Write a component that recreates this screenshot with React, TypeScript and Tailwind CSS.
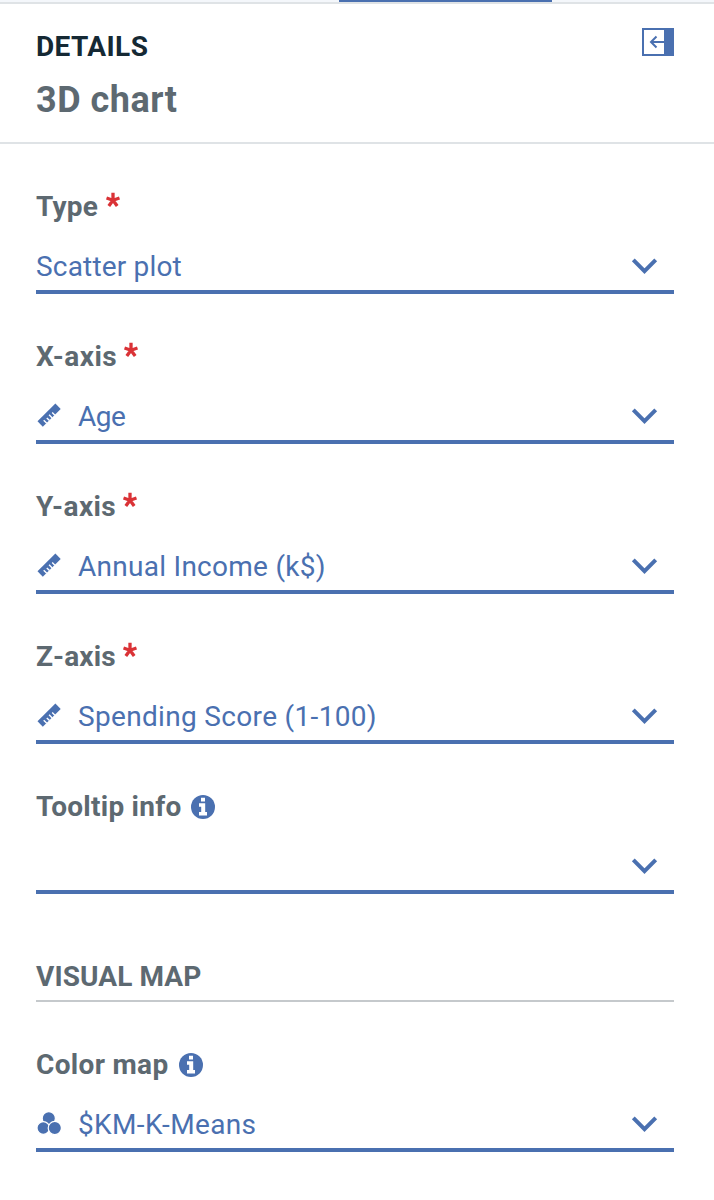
import type { ReactNode } from "react";

function Chevron() {
  return (
    <svg className="mt-[-2px] mr-4 h-5 w-[27px] shrink-0" viewBox="0 0 27 20" fill="none">
      <path d="M2.3 4.9 13.5 16.1 24.7 4.9" stroke="#4a70b0" strokeWidth="4" />
    </svg>
  );
}

function Ruler() {
  return (
    <svg className="mt-[-2px] mr-[17px] h-6 w-[25px] shrink-0" viewBox="0 0 25 24">
      <path d="M1.5 18.2 19.4.6 24.7 6 6.8 23.7Z" fill="#4a70b0" />
      <path
        d="M10.8 20.3 7.7 17.2M13.5 17.6 10.8 14.9M16.2 14.9 13.1 11.8M18.9 12.2 16.2 9.5"
        stroke="#fff"
        strokeWidth="1.4"
      />
    </svg>
  );
}

function Cluster() {
  return (
    <svg className="mt-[-2px] mr-[17px] h-6 w-[25px] shrink-0" viewBox="0 0 25 24">
      <g fill="#4a70b0" stroke="#fff" strokeWidth="1.2">
        <circle cx="12.8" cy="7.3" r="6.6" />
        <circle cx="7.3" cy="17" r="6.3" />
        <circle cx="18.8" cy="17" r="6.6" />
      </g>
    </svg>
  );
}

function Info() {
  return (
    <svg className="mt-[1px] h-6 w-6 shrink-0" viewBox="0 0 24 24">
      <circle cx="12" cy="12" r="12" fill="#4a70b0" />
      <path d="M10 2.8h4v3.8h-4zM8 8.3h6.2V17H16v3.4H8V17h2.2v-5.3H8z" fill="#fff" />
    </svg>
  );
}

function Asterisk() {
  return (
    <svg className="mt-[-13px] h-4 w-[14px] shrink-0" viewBox="0 0 14 16">
      <path
        d="M7 8.2V.8M7 8.2.5 6M7 8.2 13.5 6M7 8.2 2.8 14M7 8.2l4.2 5.8"
        stroke="#da3236"
        strokeWidth="3.3"
      />
    </svg>
  );
}

type FieldProps = {
  label: string;
  labelClass: string;
  mark: ReactNode;
  value?: string;
  valueClass?: string;
  icon?: ReactNode;
};

function Field({ label, labelClass, mark, value, valueClass, icon }: FieldProps) {
  return (
    <div>
      <div className="flex h-9 items-center">
        <span className={`shrink-0 pt-0.5 whitespace-nowrap font-bold text-[#5d6971] ${labelClass}`}>{label}</span>
        {mark}
      </div>
      <div className="mt-3.5 flex h-14 items-center border-b-4 border-[#4a70b0] pt-1">
        {icon}
        <span className={`grow pt-0.5 whitespace-nowrap text-[#4a70b0] ${valueClass ?? ""}`}>{value}</span>
        <Chevron />
      </div>
    </div>
  );
}

export default function App() {
  return (
    <main className="h-[1200px] w-[714px] overflow-hidden bg-white font-[Roboto,sans-serif] text-[28px] leading-9">
      <div className="h-1 border-b-2 border-[#dfe3e6] bg-[#f4f7fb]">
        <div className="ml-[339px] h-0.5 w-[213px] bg-[#4a70b0]" />
      </div>
      <header className="flex h-[140px] justify-between border-b-2 border-[#dfe3e6] pr-10 pl-9 pt-6">
        <div className="pt-px">
          <h2 className="whitespace-nowrap font-bold tracking-[0.4px] text-[#152934]">DETAILS</h2>
          <h1 className="mt-[11px] whitespace-nowrap text-[36px] leading-[48px] font-bold tracking-[0.5px] text-[#5d6971]">
            3D chart
          </h1>
        </div>
        <svg className="h-7 w-8" viewBox="0 0 32 28" fill="none">
          <path d="M1 1h30v26H1z" stroke="#4a70b0" strokeWidth="2" />
          <path d="M22 0h10v28H22z" fill="#4a70b0" />
          <path d="M22 14H9M14.5 8.5 9 14l5.5 5.5" stroke="#4a70b0" strokeWidth="2" />
        </svg>
      </header>
      <section className="flex flex-col gap-11 pt-11 pr-10 pl-9">
        <Field
          label="Type"
          labelClass="w-[70px] tracking-[0.2px]"
          mark={<Asterisk />}
          value="Scatter plot"
          valueClass="tracking-[0.18px]"
        />
        <Field
          label="X-axis"
          labelClass="w-[88px] tracking-[0.5px]"
          mark={<Asterisk />}
          value="Age"
          valueClass="tracking-[-0.5px]"
          icon={<Ruler />}
        />
        <Field
          label="Y-axis"
          labelClass="w-[87px] tracking-[0.4px]"
          mark={<Asterisk />}
          value="Annual Income (k$)"
          valueClass="tracking-[0.27px]"
          icon={<Ruler />}
        />
        <Field
          label="Z-axis"
          labelClass="w-[86.5px] tracking-[0.1px]"
          mark={<Asterisk />}
          value="Spending Score (1-100)"
          valueClass="tracking-[0.33px]"
          icon={<Ruler />}
        />
        <Field label="Tooltip info" labelClass="w-[155px] tracking-[0.25px]" mark={<Info />} />
      </section>
      <section className="mt-16 pr-10 pl-9">
        <h3 className="mb-11 h-11 border-b-2 border-[#c5c9cc] pt-px whitespace-nowrap font-bold tracking-[0.1px] text-[#5d6971]">
          VISUAL MAP
        </h3>
        <Field
          label="Color map"
          labelClass="w-[142.5px] tracking-[0.33px]"
          mark={<Info />}
          value="$KM-K-Means"
          valueClass="tracking-[0.37px]"
          icon={<Cluster />}
        />
      </section>
    </main>
  );
}
